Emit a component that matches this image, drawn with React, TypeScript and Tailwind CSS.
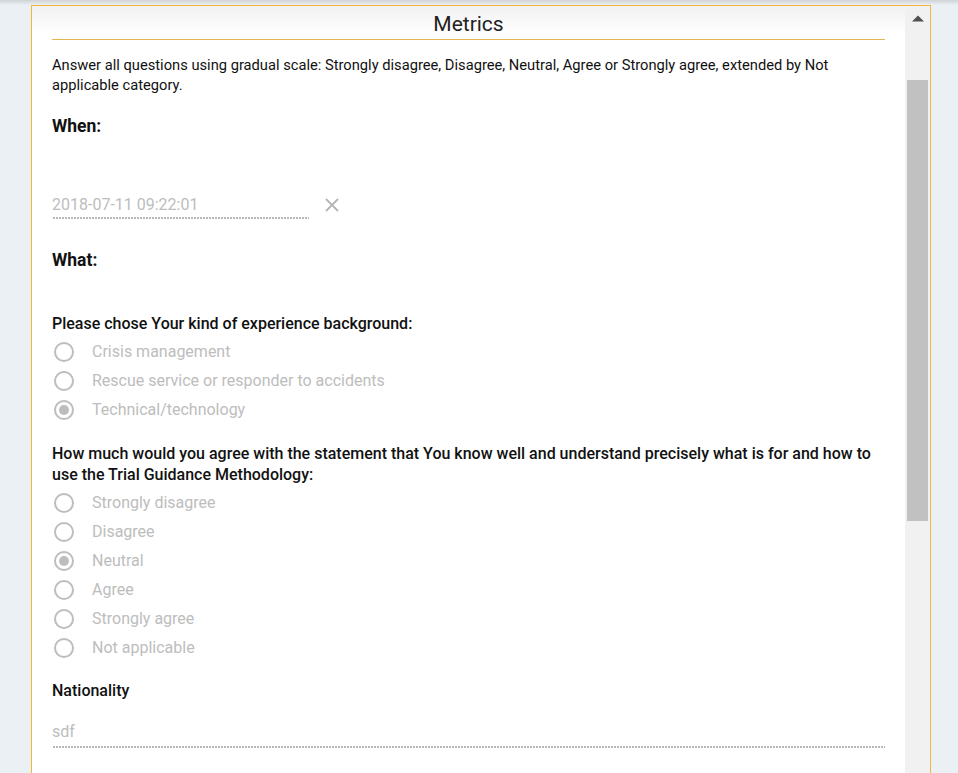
import React from "react";

const dotted =
  "bg-[linear-gradient(to_right,#b8b8b8_66%,transparent_66%)] bg-[length:3px_2px] bg-repeat-x bg-bottom";

function Radio({ label, checked }: { label: string; checked?: boolean }) {
  return (
    <div className="flex items-center h-[29px]">
      <span className="ml-[2px] w-[20px] h-[20px] rounded-full border-2 border-[#bdbdbd] flex items-center justify-center">
        {checked && <span className="w-[10px] h-[10px] rounded-full bg-[#bdbdbd]" />}
      </span>
      <span className="ml-[18px] text-[16px] text-[#bdbdbd]">{label}</span>
    </div>
  );
}

function App() {
  return (
    <div className="h-[773px] overflow-hidden bg-[#ebf0f4] font-['Roboto','Liberation_Sans',sans-serif] text-[#111]">
      <div className="h-[5px] bg-gradient-to-b from-[#cfd3d6] to-[#ebf0f4]" />
      <div className="ml-[31px] w-[900px] h-[768px] border border-b-0 border-[#f4b63a] bg-white flex">
        {/* content */}
        <div className="flex-1 px-[20px] bg-gradient-to-b from-[#f1f1f1] to-white bg-[length:100%_28px] bg-no-repeat">
          <div className="pt-[5px] pb-[2px] text-center text-[21px] leading-[26px] text-[#222] border-b border-[#e4b650]">
            Metrics
          </div>

          <p className="mt-[15px] text-[14.7px] leading-[20px]">
            Answer all questions using gradual scale: Strongly disagree, Disagree, Neutral, Agree or Strongly agree, extended by Not
            applicable category.
          </p>

          <h3 className="mt-[19px] text-[17.5px] leading-[24px] font-bold">When:</h3>

          <div className="mt-[55px] flex items-center">
            <div className={`w-[257px] pb-[2px] ${dotted}`}>
              <div className="text-[16px] leading-[24px] text-[#bdbdbd]">2018-07-11 09:22:01</div>
            </div>
            <svg className="ml-[16px] -mt-[2px]" width="14" height="14" viewBox="0 0 14 14">
              <path d="M1 1 L13 13 M13 1 L1 13" stroke="#b5b5b5" strokeWidth="1.8" fill="none" />
            </svg>
          </div>

          <h3 className="mt-[29px] text-[17.5px] leading-[24px] font-bold">What:</h3>

          <div className="mt-[41px] text-[16px] leading-[21px] font-medium">
            Please chose Your kind of experience background:
          </div>
          <div className="mt-[3px]">
            <Radio label="Crisis management" />
            <Radio label="Rescue service or responder to accidents" />
            <Radio label="Technical/technology" checked />
          </div>

          <div className="mt-[19px] text-[16px] leading-[21px] font-medium">
            How much would you agree with the statement that You know well and understand precisely what is for and how to use the
            Trial Guidance Methodology:
          </div>
          <div className="mt-[3px]">
            <Radio label="Strongly disagree" />
            <Radio label="Disagree" />
            <Radio label="Neutral" checked />
            <Radio label="Agree" />
            <Radio label="Strongly agree" />
            <Radio label="Not applicable" />
          </div>

          <div className="mt-[18px] text-[16px] leading-[21px] font-medium">Nationality</div>
          <div className={`mt-[19px] pb-[4px] ${dotted}`}>
            <div className="text-[16px] leading-[24px] text-[#bdbdbd]">sdf</div>
          </div>
        </div>

        {/* scrollbar */}
        <div className="w-[25px] bg-[#f1f1f1] flex flex-col items-center">
          <svg className="mt-[9px]" width="12" height="7" viewBox="0 0 12 7">
            <path d="M0 6.5 L6 0.5 L12 6.5 Z" fill="#505050" />
          </svg>
          <div className="mt-[58px] w-[21px] h-[441px] bg-[#c1c1c1]" />
        </div>
      </div>
    </div>
  );
}

export default App;
